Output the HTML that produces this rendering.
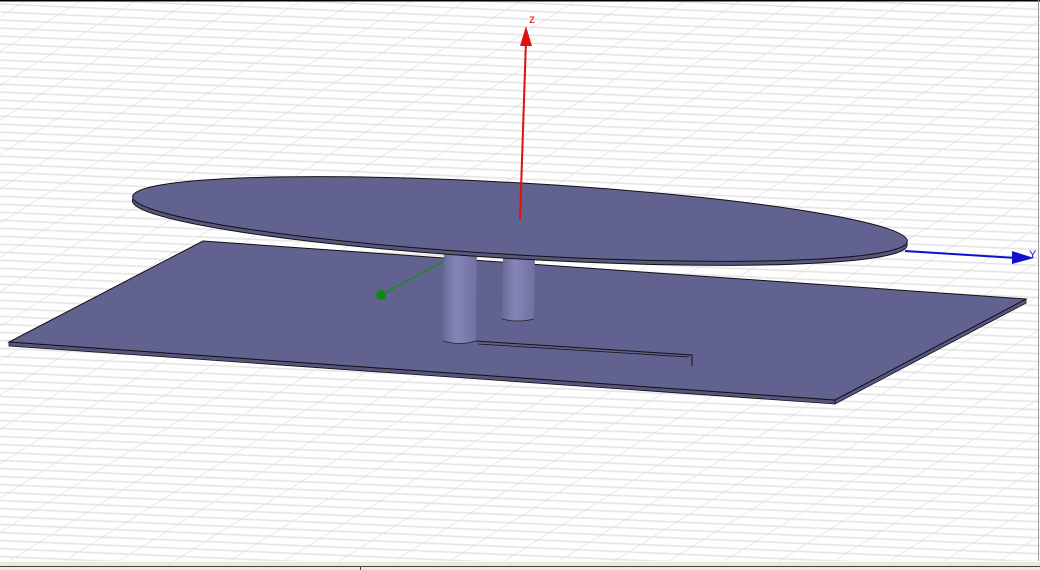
<!DOCTYPE html>
<html><head><meta charset="utf-8"><style>
html,body{margin:0;padding:0;background:#fff;width:1040px;height:570px;overflow:hidden}
svg{display:block}
</style></head><body>
<svg width="1040" height="570" viewBox="0 0 1040 570" xmlns="http://www.w3.org/2000/svg">
<defs>
<pattern id="h" width="400" height="8" patternUnits="userSpaceOnUse" patternTransform="rotate(2.5)">
<line x1="0" y1="4" x2="400" y2="4" stroke="#e4e4e4" stroke-width="1.6"/>
</pattern>
<pattern id="d" width="55" height="400" patternUnits="userSpaceOnUse" patternTransform="skewX(-58)">
<line x1="27" y1="0" x2="27" y2="400" stroke="#dadada" stroke-width="1.1"/>
</pattern>
<linearGradient id="cyl" x1="0" x2="1" y1="0" y2="0">
<stop offset="0" stop-color="#6a6a98"/><stop offset="0.4" stop-color="#8585b8"/><stop offset="1" stop-color="#6f6fa0"/>
</linearGradient>
</defs>
<rect width="1040" height="570" fill="#fff"/>
<rect width="1040" height="562" fill="url(#h)"/>
<rect width="1040" height="562" fill="url(#d)"/>
<line x1="0" y1="0.5" x2="1040" y2="0.5" stroke="#000" stroke-width="2"/>
<line x1="1038.5" y1="0" x2="1038.5" y2="562" stroke="#999"/>

<!-- ground plane -->
<polygon points="9,342 835,400 835,404 9,346" fill="#55557f" stroke="#111" stroke-width="0.8"/>
<polygon points="835,400 1026,299 1026,303 835,404" fill="#58588a" stroke="#111" stroke-width="0.8"/>
<polygon points="203,241 1026,299 835,400 9,342" fill="#626290" stroke="#111" stroke-width="1"/>
<!-- slot -->
<polyline points="475,341 692,355 692,366" fill="none" stroke="#111" stroke-width="1"/>
<polyline points="478,344 689,357" fill="none" stroke="#111" stroke-width="0.8"/>

<!-- green axis -->
<line x1="381" y1="295" x2="452" y2="257" stroke="#1a8a1a" stroke-width="1.5"/>
<circle cx="381" cy="295" r="5" fill="#0d8a10"/>

<!-- cylinders -->
<path d="M444,250 L477,250 L476,341 Q460,346 443,341 Z" fill="url(#cyl)"/>
<path d="M443,341 Q460,346 476,341" fill="none" stroke="#222" stroke-width="0.8"/>
<path d="M503,250 L535,250 L534,319 Q518,323 502,319 Z" fill="url(#cyl)"/>
<path d="M502,319 Q518,323 534,319" fill="none" stroke="#222" stroke-width="0.8"/>

<!-- disk -->
<g transform="rotate(3.3 520 219)">
<ellipse cx="520" cy="223" rx="388" ry="36" fill="#56567f" stroke="#111" stroke-width="1"/>
<ellipse cx="520" cy="219" rx="388" ry="36" fill="#626290" stroke="#111" stroke-width="1"/>
</g>

<!-- z axis -->
<line x1="520" y1="220" x2="526" y2="40" stroke="#e01010" stroke-width="2"/>
<polygon points="526,26 520,46 532,46" fill="#e01010"/>
<text x="529" y="23" font-family="Liberation Sans, sans-serif" font-size="12" fill="#e01010">z</text>
<!-- y axis -->
<line x1="905" y1="251" x2="1016" y2="258" stroke="#1010d0" stroke-width="2"/>
<polygon points="1034,258 1012,251 1012,264" fill="#1010d0"/>
<text x="1029" y="258" font-family="Liberation Sans, sans-serif" font-size="11" fill="#1010d0">Y</text>

<!-- status bar -->
<rect x="0" y="561" width="1040" height="9" fill="#ece9d8"/>
<line x1="0" y1="561.5" x2="1040" y2="561.5" stroke="#fff"/>
<line x1="0" y1="566.5" x2="1040" y2="566.5" stroke="#444"/>
<line x1="360.5" y1="566" x2="360.5" y2="570" stroke="#444"/>
</svg>
</body></html>
